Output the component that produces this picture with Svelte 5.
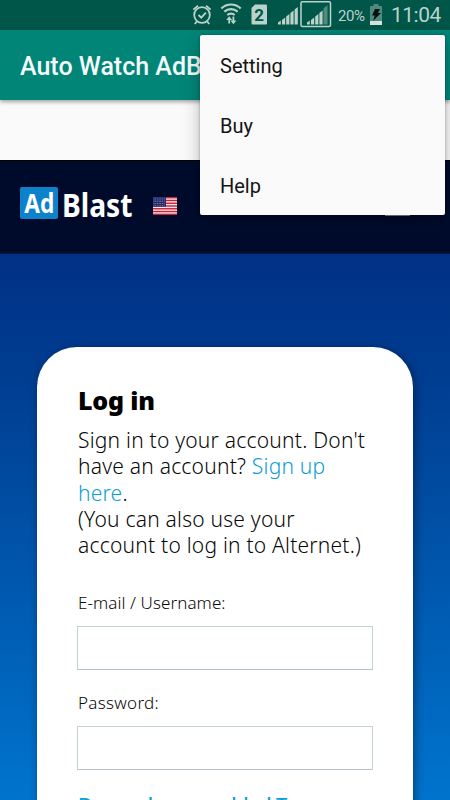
<script lang="ts">
  const menuItems = ['Setting', 'Buy', 'Help'];

  const fields = [
    { id: 'username', label: 'E-mail / Username:', type: 'text' },
    { id: 'password', label: 'Password:', type: 'password' },
  ];

  const stars = Array.from({ length: 35 }, (_, i) => ({
    x: 1 + (i % 7) * 1.7,
    y: 1.1 + Math.floor(i / 7) * 1.8,
  }));
</script>

<div class="screen">
  <div class="status-bar">
    <svg class="status-icons" width="142" height="30" viewBox="0 0 142 30" aria-hidden="true">
      <!-- alarm -->
      <g fill="none" stroke="#b9d3cb" stroke-width="1.8">
        <circle cx="12" cy="15" r="7.8" />
        <path d="M3.3 9.6 8 5.8M16 5.8l4.7 3.8M6.8 21.5l-2 2.5M17.2 21.5l2 2.5M8.5 15l2.8 2.7 4.6-5" />
      </g>
      <!-- wifi -->
      <g fill="none" stroke="#b9d3cb" stroke-width="2.2">
        <path d="M31.3 8.5c5.4-5.3 14-5.3 19.4 0M34.3 11.8c3.8-3.6 9.6-3.6 13.4 0M37.3 15c2-1.8 5.400-1.8 7.400 0" />
        <path d="M39.2 23.5v-5M43.4 16.5v5.5" stroke-width="1.8" />
      </g>
      <path d="m36.2 20 3-3.8 3 3.8zM40.4 20.5l3 3.8 3-3.8z" fill="#b9d3cb" />
      <!-- sim -->
      <path d="M65 4.5h11a1 1 0 0 1 1 1v18a1 1 0 0 1-1 1H62.5a1 1 0 0 1-1-1V8z" fill="#b9d3cb" />
      <text x="69.2" y="20.5" text-anchor="middle" class="sim">2</text>
      <!-- signals -->
      <path d="M88 24.5v-2l2.8-2v4zM92 24.5V20l3.2-2.5v7zM96.2 24.5v-8l3.2-2.5v10.5zM100.4 24.5V13l3.2-2.5v14zM104.6 24.5v-15L107.8 7v17.5z" fill="#b9d3cb" />
      <rect x="111" y="1.8" width="29.5" height="24.6" rx="1.5" fill="none" stroke="#b9d3cb" stroke-width="1.5" />
      <path d="M117 24.5v-2l2.8-2v4zM121 24.5V20l3.2-2.5v7zM125.2 24.5v-8l3.2-2.5v10.5zM129.4 24.5V13l3.2-2.5v14z" fill="#b9d3cb" />
      <path d="M133.5 24.5v-16l4-3.5v19.5z" fill="#528b7d" />
    </svg>
    <span class="percent">20%</span>
    <svg class="battery" width="12" height="22" viewBox="0 0 12 22" aria-hidden="true">
      <path d="M3.5 0h5v2H12v19H0V2h3.5z" fill="#4e8b7c" />
      <path d="M0 17h12v4H0z" fill="#d3e2de" />
      <path d="M5 5h5L8 9h3l-8 8 1.8-5.5H2z" fill="#06120f" />
    </svg>
    <span class="clock">11:04</span>
  </div>

  <header class="toolbar">
    <h1>Auto Watch AdBlast</h1>
  </header>
  <div class="strip"></div>

  <nav class="site-nav">
    <div class="logo">
      <div class="ad"><span>Ad</span></div>
      <span class="blast">Blast</span>
    </div>
    <svg class="flag" width="24" height="18" viewBox="0 0 24 18" role="img" aria-label="English">
      <rect width="24" height="18" fill="#f4e4e9" />
      {#each Array(7) as _, i}
        <rect y={i * 2.77} width="24" height="1.39" fill="#c91f35" />
      {/each}
      <rect width="13" height="9.7" fill="#262b6b" />
      {#each stars as star}
        <circle cx={star.x} cy={star.y} r="0.42" fill="#b9bde0" />
      {/each}
    </svg>
    <span class="burger"></span>
  </nav>

  <main>
    <form class="card">
      <h2>Log in</h2>
      <p>
        <span class="line">Sign in to your account. Don't</span>
        <span class="line">have an account? <a href="#signup">Sign up</a></span>
        <span class="line"><a href="#signup">here</a>.</span>
        <span class="line">(You can also use your</span>
        <span class="line">account to log in to Alternet.)</span>
      </p>
      {#each fields as field}
        <label class={field.id} for={field.id}>{field.label}</label>
        <input id={field.id} type={field.type} />
      {/each}
      <a class="two-factor" href="#two-factor">Do you have enabled Two-</a>
    </form>
  </main>

  <div class="menu" role="menu">
    {#each menuItems as item}
      <div class="menu-item" role="menuitem">{item}</div>
    {/each}
  </div>
</div>

<style>
  :global(body) {
    margin: 0;
  }

  .screen {
    position: relative;
    display: flex;
    flex-direction: column;
    width: 450px;
    height: 800px;
    overflow: hidden;
    background: #fafafa;
    font-family: Roboto, sans-serif;
  }

  .status-bar {
    display: flex;
    flex: none;
    align-items: center;
    box-sizing: border-box;
    height: 30px;
    padding-left: 190px;
    background: #005648;
    color: #b9d3cb;
  }
  .status-icons {
    flex: none;
  }
  .sim {
    fill: #005648;
    font: 700 17px Roboto, sans-serif;
  }
  .percent {
    width: 32px;
    margin: 1px 0 0 6px;
    font-size: 15px;
    letter-spacing: -0.4px;
  }
  .battery {
    flex: none;
    margin-top: -1px;
  }
  .clock {
    margin: 0 0 0 9px;
    font-size: 21px;
    letter-spacing: -0.5px;
  }

  .toolbar {
    z-index: 1;
    display: flex;
    flex: none;
    align-items: center;
    height: 70px;
    padding-left: 20px;
    background: #008577;
    box-shadow: 0 2px 4px rgba(0, 0, 0, 0.35);
  }
  /* the title runs on under the overflow menu, so it is clipped there */
  h1 {
    width: 180px;
    margin: 3px 0 0;
    overflow: hidden;
    color: #f5fafa;
    font-size: 25px;
    font-weight: 500;
    white-space: nowrap;
  }
  .strip {
    flex: none;
    height: 60px;
  }

  .site-nav {
    display: flex;
    flex: none;
    align-items: flex-start;
    box-sizing: border-box;
    height: 94px;
    padding: 26px 40px 0 20px;
    border-top: 1px solid #000;
    border-bottom: 1px solid #001847;
    background: #000b2c;
  }
  .logo {
    display: flex;
    width: 133px;
    color: #fff;
    font-family: "Noto Sans", sans-serif;
    font-weight: 700;
  }
  .ad {
    display: flex;
    justify-content: center;
    width: 38px;
    height: 32px;
    border-radius: 2px;
    background: #0d82cb;
    font-size: 26px;
    line-height: 32px;
  }
  .ad span {
    transform: scaleX(0.87);
  }
  .blast {
    margin-left: 4px;
    font-size: 33px;
    line-height: 35px;
    transform: scaleX(0.855);
    transform-origin: left;
  }
  .flag {
    flex: none;
    margin-top: 10px;
  }
  .burger {
    width: 25px;
    height: 2px;
    margin: 27px 0 0 auto;
    background: #8b90a1;
  }

  main {
    flex: 1;
    padding: 93px 37px 0;
    background: linear-gradient(#003186, #003d91 20%, #005bb2 58%, #007dd7);
  }
  .card {
    display: flex;
    flex-direction: column;
    box-sizing: border-box;
    width: 376px;
    height: 520px;
    padding: 36px 40px 0 41px;
    border-radius: 40px;
    background: #fff;
    box-shadow: 2px 2px 10px rgba(0, 0, 0, 0.4);
    color: #080808;
    font-family: "Noto Sans", sans-serif;
    font-weight: 300;
  }
  h2 {
    margin: 0;
    color: #000;
    font-size: 25px;
    font-weight: 900;
    line-height: 34px;
    letter-spacing: -0.2px;
  }
  p {
    margin: 10px 0 0;
    font-size: 21px;
    line-height: 26.3px;
    letter-spacing: 0.22px;
  }
  .line {
    display: block;
    white-space: nowrap;
  }
  a {
    color: #0b9ed5;
    text-decoration: none;
  }
  label {
    height: 24px;
    margin-top: 21px;
    font-size: 17px;
    line-height: 24px;
    letter-spacing: 0.08px;
  }
  label.username {
    margin-top: 33px;
  }
  label.password {
    letter-spacing: 0.3px;
  }
  input {
    box-sizing: border-box;
    width: 296px;
    height: 44px;
    margin: 11px 0 0 -1px;
    border: 1px solid #c5d3d8;
    border-bottom-color: #b5c2ca;
    border-radius: 0;
    background: #fff;
    outline: none;
  }
  .two-factor {
    margin-top: 21px;
    font-size: 20px;
    font-weight: 500;
    line-height: 28px;
    letter-spacing: -0.4px;
    white-space: nowrap;
  }

  .menu {
    position: absolute;
    z-index: 2;
    top: 35px;
    left: 200px;
    width: 245px;
    height: 180px;
    border-radius: 2px;
    background: #fafafa;
    box-shadow: 0 8px 18px rgba(0, 0, 0, 0.25), 0 0 3px rgba(0, 0, 0, 0.3);
  }
  .menu-item {
    height: 60px;
    padding-left: 20px;
    color: #141414;
    font-size: 20px;
    line-height: 62px;
  }
</style>
